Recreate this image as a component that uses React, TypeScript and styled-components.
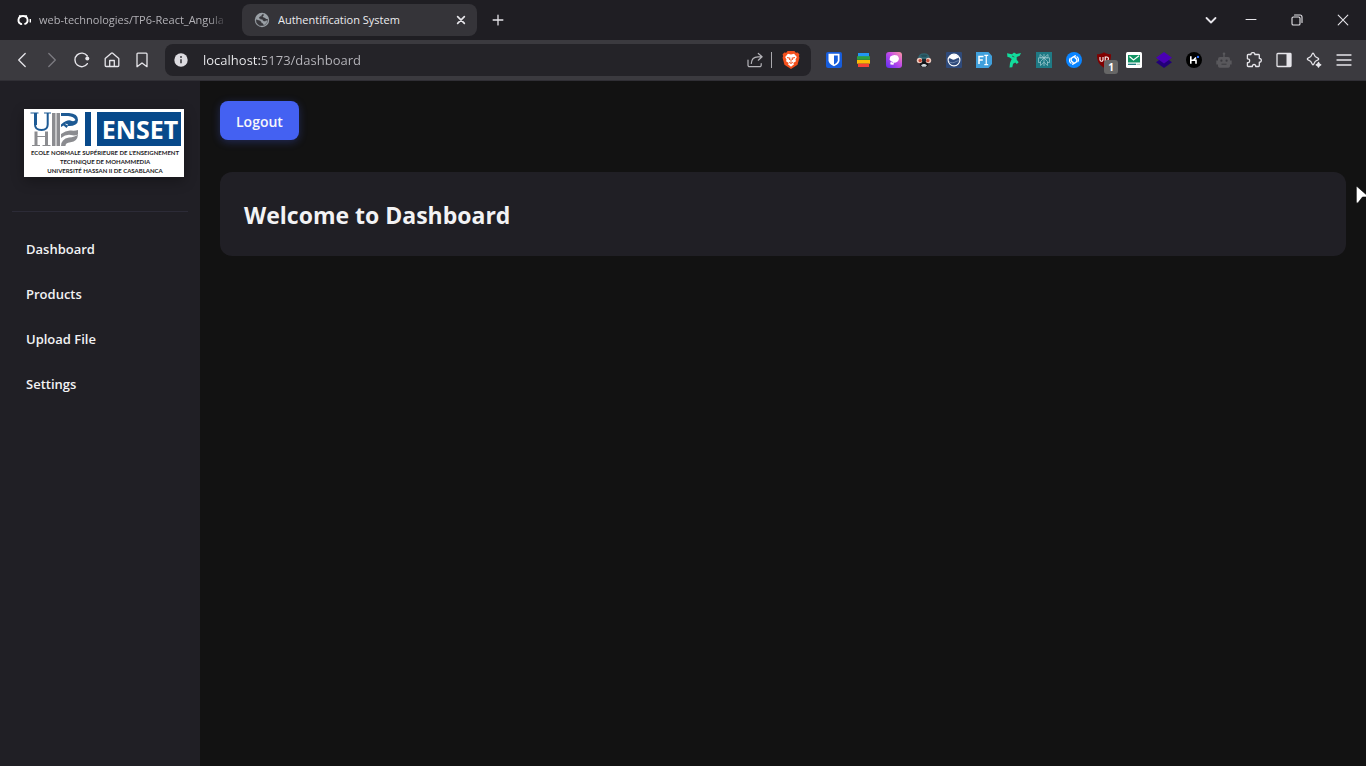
import React from "react";
import styled, { createGlobalStyle } from "styled-components";

const GlobalStyle = createGlobalStyle`
  * { box-sizing: border-box; }
  body {
    margin: 0;
    background: #121212;
    color: #f2f2f4;
    font-family: "Open Sans", "Noto Sans", sans-serif;
    overflow-x: hidden;
  }
  button { font-family: inherit; border: 0; padding: 0; background: none; color: inherit; cursor: pointer; }
`;

const Screen = styled.div`
  display: flex;
  flex-direction: column;
  min-height: 100vh;
`;

/* ---------- browser chrome ---------- */

const TabStrip = styled.div`
  display: flex;
  align-items: center;
  height: 40px;
  background: #1f1e23;
`;

const Tab = styled.div<{ $active?: boolean }>`
  display: flex;
  align-items: center;
  gap: ${(p) => (p.$active ? 8 : 7)}px;
  width: ${(p) => (p.$active ? 235 : 228)}px;
  height: 32px;
  margin-right: ${(p) => (p.$active ? 6 : 14)}px;
  padding: ${(p) => (p.$active ? "0 8px 0 12px" : "0 0 0 16px")};
  border-radius: 8px;
  background: ${(p) => (p.$active ? "#353439" : "transparent")};
  color: ${(p) => (p.$active ? "#ececef" : "#b2b1b6")};
`;

const TabTitle = styled.button<{ $fade?: boolean }>`
  flex: 1;
  min-width: 0;
  overflow: hidden;
  text-align: left;
  white-space: nowrap;
  font-size: 11px;
  line-height: 20px;
  ${(p) => p.$fade && "mask-image: linear-gradient(90deg, #000 calc(100% - 20px), transparent);"}
`;

const Spacer = styled.div`
  flex: 1;
`;

const IconButton = styled.button<{ $w?: number; $h?: number }>`
  position: relative;
  display: flex;
  flex: none;
  align-items: center;
  justify-content: center;
  width: ${(p) => p.$w ?? 30}px;
  height: ${(p) => p.$h ?? 30}px;
  color: #e6e5ea;
`;

const Toolbar = styled.div`
  display: flex;
  align-items: center;
  gap: 8px;
  height: 41px;
  padding: 0 7px;
  background: #3b3a3f;
  border-bottom: 1px solid #302f35;
`;

const IconGroup = styled.div`
  display: flex;
`;

const AddressBar = styled.div`
  display: flex;
  flex: 1;
  align-items: center;
  min-width: 0;
  height: 32px;
  padding: 0 5px 0 8px;
  border-radius: 8px;
  background: #242328;
`;

const AddressInput = styled.input`
  flex: 1;
  min-width: 0;
  height: 24px;
  margin-left: 14px;
  padding: 0;
  border: 0;
  outline: 0;
  font-family: inherit;
  font-size: 13px;
  line-height: 24px;
  color: #dcdce0;
  background: linear-gradient(90deg, #f0f0f3 58px, #b9b8be 58px);
  background-clip: text;
  -webkit-text-fill-color: transparent;
`;

const AddressDivider = styled.span`
  width: 1px;
  height: 16px;
  margin-right: 4px;
  background: #a9a8ad;
`;

const Badge = styled.span`
  position: absolute;
  right: 1px;
  bottom: 1px;
  width: 14px;
  height: 14px;
  border-radius: 3px;
  background: #666666;
  color: #ffffff;
  font-size: 10px;
  font-weight: 700;
  line-height: 14px;
  text-align: center;
`;

/* ---------- dashboard page ---------- */

const Page = styled.div`
  display: flex;
  flex: 1;
`;

const Sidebar = styled.aside`
  width: 200px;
  flex: none;
  padding: 28px 12px;
  background: #201f25;
`;

const Brand = styled.div`
  padding: 0 12px 34px;
  border-bottom: 1px solid #2c2b37;
`;

const LogoFrame = styled.svg`
  display: block;
  width: 160px;
  height: 68px;
  background: #ffffff;
  box-shadow: 0 4px 12px rgba(0, 0, 0, 0.3);
`;

const Nav = styled.nav`
  display: flex;
  flex-direction: column;
  gap: 4px;
  padding-top: 17px;
`;

const NavLink = styled.a`
  padding: 10px 14px;
  border-radius: 8px;
  color: #f2f2f4;
  font-size: 13px;
  font-weight: 600;
  line-height: 21px;
  text-decoration: none;
`;

const Main = styled.main`
  flex: 1;
  min-width: 0;
  padding: 20px;
`;

const LogoutButton = styled.button`
  height: 39px;
  padding: 2px 16px 0;
  border-radius: 8px;
  background: #4461f2;
  box-shadow: 0 2px 8px rgba(68, 97, 242, 0.3);
  color: #f6f6fa;
  font-size: 14px;
  font-weight: 600;
`;

const Card = styled.section`
  margin-top: 32px;
  padding: 25px 24px 23px;
  border-radius: 12px;
  background: #201f25;
`;

const Heading = styled.h1`
  margin: 0;
  font-size: 23px;
  font-weight: 700;
  line-height: 36px;
`;

const Pointer = styled.svg`
  position: fixed;
  top: 185px;
  left: calc(100% - 11px);
`;

/* ---------- icons ---------- */

const Icon = ({ children, size = 16, sw = 1.3 }: { children: React.ReactNode; size?: number; sw?: number }) => (
  <svg width={size} height={size} viewBox="0 0 16 16" fill="none" stroke="currentColor" strokeWidth={sw} strokeLinecap="round" strokeLinejoin="round" aria-hidden="true">
    {children}
  </svg>
);

const Art = ({ children, size = 16 }: { children: React.ReactNode; size?: number }) => (
  <svg width={size} height={size} viewBox="0 0 16 16" aria-hidden="true">
    {children}
  </svg>
);

const navIcons = [
  { label: "Back", icon: <Icon><path d="M11.2 1.5 4.7 8l6.500 6.500" /></Icon> },
  { label: "Forward", icon: <Icon><path stroke="#7c7b81" d="M4.800 1.500 11.300 8l-6.500 6.500" /></Icon> },
  {
    label: "Reload",
    icon: (
      <Icon sw={1.4}>
        <path d="M13.400 11.700A6.800 6.800 0 1 1 13.300 4" />
        <circle cx="13.300" cy="6.500" r="2" fill="currentColor" stroke="none" />
      </Icon>
    ),
  },
  {
    label: "Home",
    icon: (
      <Icon>
        <path d="M1.200 6.500 7.300 1.200a1.100 1.100 0 0 1 1.400 0l6.100 5.300v7a1 1 0 0 1-1 1H2.200a1 1 0 0 1-1-1z" />
        <path d="M5.700 14.300V8.500h4.600v5.800" />
      </Icon>
    ),
  },
  { label: "Bookmark", icon: <Icon><path d="M3 2a.9.9 0 0 1 .9-.9h8.200a.9.9 0 0 1 .9.900v12.700l-5-3.800-5 3.800z" /></Icon> },
];

const extensions: { label: string; icon: React.ReactNode; badge?: string }[] = [
  {
    label: "Bitwarden",
    icon: (
      <Art>
        <rect width="16" height="16" rx="2" fill="#175ddc" />
        <path d="M2.500 1.800h11v6.400c0 3-3.200 4.900-5.500 6-2.300-1.100-5.500-3-5.500-6z" fill="#fff" />
        <path d="M8 3.400h3.800v4.800c0 1.900-2 3.200-3.800 4.200z" fill="#175ddc" />
      </Art>
    ),
  },
  {
    label: "Layers",
    icon: (
      <Art>
        <path d="M2 1h11v4H2z" fill="#2196f3" />
        <path d="M1 4.200h13v3.600H1z" fill="#2e9e3f" />
        <path d="M1 8h13v3.700H1z" fill="#fbbc05" />
        <path d="M2 11.700h11V15H2z" fill="#f44336" />
      </Art>
    ),
  },
  {
    label: "Design",
    icon: (
      <Art>
        <defs>
          <linearGradient id="violet" x1="1" y1="0" x2="0" y2="1">
            <stop offset="0" stopColor="#ff9aa0" />
            <stop offset="0.450" stopColor="#c24be8" />
            <stop offset="1" stopColor="#5b2df0" />
          </linearGradient>
        </defs>
        <rect width="16" height="16" rx="3" fill="url(#violet)" />
        <path d="M4.300 4.500Q7.500 2 11.300 3.500q3 3 .6 5.700L10 10.500l-2 .3-.5 1.900-3-.2-.2-1.800.9-1L3.500 7.500z" fill="#fff" />
        <path d="m4.500 9.200 2.800 1.500" stroke="#a04be8" strokeWidth="0.700" />
      </Art>
    ),
  },
  {
    label: "Mask",
    icon: (
      <Art>
        <path d="M2 6.500C2.300 3 4.500 1.200 8 1.200s5.700 1.800 6 5.300L15 8H1z" fill="#2f6470" />
        <path d="M4.500 3.200Q8 2 11.500 3.200L10 5H6z" fill="#25505b" />
        <path d="M2.500 9h11l-1.300 4L10.500 15h-5l-1.700-2z" fill="#121317" />
        <circle cx="3.600" cy="8.500" r="2.800" fill="#ecc9bd" />
        <circle cx="12.400" cy="8.500" r="2.800" fill="#ecc9bd" />
        <circle cx="4.200" cy="8.600" r="1.700" fill="#c04a38" />
        <circle cx="11.800" cy="8.600" r="1.700" fill="#c04a38" />
        <path d="M6 7h4v2.300H6z" fill="#1b2b33" />
        <path d="M5 13.200 7 12h2l2 1.200-1.300 1.600H6.300z" fill="#cfd6da" />
      </Art>
    ),
  },
  {
    label: "Globe",
    icon: (
      <Art>
        <rect width="16" height="16" rx="1" fill="#2f4a7a" />
        <circle cx="8" cy="8" r="5.900" fill="none" stroke="#fff" strokeWidth="1.100" />
        <path d="M2.600 6.500C4.500 5.300 6 8.500 8.600 7.600c2-.7 2.700-2 4.400-1.400A5.400 5.400 0 0 0 2.600 6.500z" fill="#fff" />
        <path d="M3 9.500c2 2 5 1.300 6.800.2 1.300-.8 2.400-1 3.500-.6" stroke="#8fa3c4" strokeWidth="0.700" fill="none" />
      </Art>
    ),
  },
  {
    label: "Font inspector",
    icon: (
      <Art>
        <path d="M0 0h12.500L16 4v8l-3.500 4H0z" fill="#40a0dc" />
        <path d="M3 12V4.500h4.500M3 8h3.800" stroke="#fff" strokeWidth="1.500" fill="none" />
        <path d="M8.300 3.300h3.900M10.250 3.300v9.400M8.300 12.700h3.900" stroke="#fff" strokeWidth="1.200" />
      </Art>
    ),
  },
  {
    label: "Runner",
    icon: (
      <Art>
        <path d="M1 1.200 6 2.300 8 .6l2.500 1.500L15 .9l-1.300 2.800-3 1.300v2.700l2 2.600-1.900 1.600-1.500-1.400-2.200 1.300-.8 3.400-2.800.3.500-4.500 1.700-4L3.200 5.200 1.500 5z" fill="#12dc9c" />
        <path d="m6 4 2.300 1" stroke="#3b3a3f" strokeWidth="0.700" />
      </Art>
    ),
  },
  {
    label: "Perplexity",
    icon: (
      <Art>
        <rect width="16" height="16" fill="#1f7a85" />
        <path d="M8 2v12M4 2.500v3.300h8V2.500L8 5.800zM2.500 5.800h11v4.700h-2.200M2.500 5.800v4.700h2.200M8 6 4.500 9.500v4L8 10.300l3.500 3.200v-4z" stroke="#a3cdd2" strokeWidth="0.700" fill="none" />
      </Art>
    ),
  },
  {
    label: "Shazam",
    icon: (
      <Art>
        <circle cx="8" cy="8" r="8" fill="#0a84ff" />
        <path d="M9.300 3.800 6.200 5.700C4.500 6.800 4.800 8.600 6 9.600l1 .7M6.700 12.200l3.100-1.900c1.700-1.100 1.400-2.900.2-3.900l-1-.7" stroke="#fff" strokeWidth="1.500" fill="none" strokeLinecap="round" />
        <path d="M4.100 6.200c-1.300 2-.5 4.200 1 5M11.900 9.800c1.300-2 .5-4.200-1-5" stroke="#fff" strokeWidth="1.100" fill="none" strokeLinecap="round" />
      </Art>
    ),
  },
  {
    label: "uBlock Origin",
    badge: "1",
    icon: (
      <Art>
        <path d="M8 .3c2 1.500 4.500 2 7 2 0 6-1.200 10-7 13.400C2.200 12.300 1 8.300 1 2.300c2.500 0 5-.5 7-2z" fill="#800000" />
        <path d="M4 5v2.800a1.500 1.500 0 0 0 3 0V5M9.200 9.500V5h1.500a1.500 1.500 0 0 1 0 3.500" stroke="#fff" strokeWidth="1.100" fill="none" />
      </Art>
    ),
  },
  {
    label: "Mail",
    icon: (
      <Art>
        <rect width="16" height="16" rx="1.500" fill="#fff" />
        <path d="M2 3h12v7.500H2z" fill="#129464" />
        <path d="m3.500 4.500 4 3.500L13 3.800" stroke="#fff" strokeWidth="1.100" fill="none" />
        <path d="M2 12.300h8" stroke="#12747a" strokeWidth="1.300" />
        <path d="M10.500 12.300H14" stroke="#9fc8b8" strokeWidth="1" />
      </Art>
    ),
  },
  {
    label: "Stack",
    icon: (
      <Art>
        <path d="m8 4.600 8 5.700-8 5.700-8-5.700z" fill="#220078" />
        <path d="m8 0 8 5.700-8 5.700-8-5.700z" fill="#4a00b4" />
      </Art>
    ),
  },
  {
    label: "Kit",
    icon: (
      <Art>
        <circle cx="8" cy="8" r="8" fill="#000" />
        <path d="M4.800 4.300v7.500M5 8.300h2.500L10 5.500M7.700 8.300H10v3.500" stroke="#fff" strokeWidth="1.600" fill="none" />
        <circle cx="12" cy="4.900" r="1.200" fill="#2d6cf6" />
      </Art>
    ),
  },
  {
    label: "Robot",
    icon: (
      <Art>
        <path d="M7.300 2.500h1.400V5H12a2 2 0 0 1 2 2v1.500h1.700v4H14V14a1.700 1.700 0 0 1-1.700 1.700H3.700A1.700 1.700 0 0 1 2 14v-1.500H.3v-4H2V7a2 2 0 0 1 2-2h3.300z" fill="#59585c" />
        <circle cx="8" cy="1.800" r="1.300" fill="#59585c" />
        <circle cx="5.400" cy="8.700" r="1.100" fill="#3b3a3f" />
        <circle cx="10.600" cy="8.700" r="1.100" fill="#3b3a3f" />
        <path d="M5.500 12.200h5" stroke="#3b3a3f" strokeWidth="1" />
      </Art>
    ),
  },
  {
    label: "Extensions",
    icon: (
      <Icon>
        <path d="M2.200 2.500H5c-.4-2.500 4.200-2.500 3.800 0h3.700a.8.8 0 0 1 .8.800V6.500c2.700-.4 2.700 4 0 3.700v3.500a.8.8 0 0 1-.8.800H9.700c.4-2.700-3.700-2.700-3.300 0H2.200a.8.8 0 0 1-.8-.8v-3c3 .3 3-4.200 0-3.900V3.300a.8.8 0 0 1 .8-.8z" />
      </Icon>
    ),
  },
  {
    label: "Side panel",
    icon: (
      <Icon>
        <rect x="1" y="1.500" width="14" height="13" rx="0.800" />
        <path d="M10.500 1.500H15v13h-4.500z" fill="currentColor" stroke="none" />
      </Icon>
    ),
  },
  {
    label: "Leo AI",
    icon: (
      <Icon>
        <path d="M7 1.200c.6 0 .8.500 1 1.200.7 2.300 1.200 2.800 3.500 3.500.7.200 1.200.5 1.200 1.100s-.5.900-1.200 1.100C9.200 8.800 8.700 9.300 8 11.600c-.2.700-.4 1.200-1 1.200s-.8-.5-1-1.200C5.300 9.300 4.800 8.800 2.500 8.100 1.800 7.900 1.300 7.600 1.300 7s.5-.9 1.200-1.100C4.800 5.200 5.300 4.700 6 2.400c.2-.7.4-1.200 1-1.200z" />
        <path d="M12.500 10.500q.4 1.800 2.300 2.300-1.900.5-2.300 2.300-.4-1.800-2.300-2.300 1.900-.5 2.300-2.300z" fill="currentColor" />
      </Icon>
    ),
  },
  { label: "Menu", icon: <Icon><path d="M1 3h14M1 8h14M1 13h14" /></Icon> },
];

const GithubIcon = () => (
  <Art>
    <path d="M5.800 12.200C.8 10.800 1.600 4 7 4s6.200 6.800 1.400 8.200" stroke="#fff" strokeWidth="1.900" fill="none" />
    <path d="M2.800 2.900 5.500 3.800 4 6zM11.200 2.900 8.500 3.800 10 6z" fill="#fff" />
    <path d="m2 10.300 2.400 2h1.800" stroke="#fff" strokeWidth="1" fill="none" />
    <path d="M14.300 7v3.500" stroke="#fff" strokeWidth="1.400" />
  </Art>
);

const GlobeIcon = () => (
  <Art>
    <circle cx="8" cy="8" r="7.200" fill="#9aa0a6" />
    <path d="M9.500 2.200C7 2.500 8.700 4.200 6.500 4.600 4.800 5 5 7 7 7.100c2.400.1 1.500 2 3.400 2 1.300 0 1.500-1 3.300-.7-.4 2.500-2 4.500-4.500 5.200.2-1.600-.2-2-1.300-2.400-1.400-.6-.3-1.700-1.900-2.300C4.800 8.500 3.500 8.300 2.200 7.800c-.1 3 1.600 5.300 4.300 6" stroke="#38373c" strokeWidth="0.500" fill="none" />
    <path d="M9.500 2.200C7 2.500 8.700 4.200 6.500 4.600 4.800 5 5 7 7 7.100c2.400.1 1.500 2 3.400 2 1.300 0 1.500-1 3.300-.7l.1-1.400c-1 .2-1.800-.1-2.500-.8-.9-.9-2-.5-2.500-1.200-.5-.8 1.500-.8.7-2.800z" fill="#38373c" />
    <path d="M2.200 7.800c1.300.5 2.600.7 3.800 1.100 1.600.6.500 1.700 1.900 2.300 1.100.4 1.500.8 1.300 2.400-3.700 1-7.200-1.800-7-5.800z" fill="#38373c" />
  </Art>
);

const EnsetLogo = () => (
  <LogoFrame viewBox="0 0 160 68" role="img" aria-label="ENSET Mohammedia">
    <g fill="none" stroke="#8b8c90">
      <path d="M12 22.500v14M22.500 22.500v14" strokeWidth="3" />
      <path d="M8 36.500h8M18.500 36.500h8M12 27.500h10.500" strokeWidth="1.200" />
    </g>
    <path d="M6.500 4h8M20 4h7" stroke="#1d5a94" strokeWidth="1.200" />
    <path d="M11 4v11.500q0 5.500 6.500 5.500 6.200 0 6.200-5.500V4" fill="none" stroke="#1d5a94" strokeWidth="2" />
    <path d="M11.500 4v12" stroke="#1d5a94" strokeWidth="3" />
    <path d="M28 4h3.500v33H28zM32.500 4H36v33h-3.500z" fill="#8b8c90" />
    <path d="M37 4h8q9 .5 9 7 0 3-2.500 4.500-3.500 2-7.500 1.500l-1.500 2-3-2.500-2.500 1.500v-2.500q6-5 9.500-4 3.500 1.500 5-.5Q50 7.500 44 7H37z" fill="#1d5a94" />
    <path d="m41.500 15 2.500 1" stroke="#fff" strokeWidth="0.900" />
    <path d="M37 25q5-4 10-3.500 4 .5 7-.5v4.500q-3 1.500-7 .5-5-1-10 3z" fill="#8b8c90" />
    <path d="M37 37q0-7 8-8.500 6-.5 9-3-.5 7-7.500 7.700Q41 34 41.500 37z" fill="#8b8c90" />
    <path d="M61 3h6v34h-6zM73 3h84v34H73z" fill="#07498a" />
    <text x="116" y="30" textAnchor="middle" fill="#fff" fontFamily="Open Sans" fontWeight="700" fontSize="25">ENSET</text>
    <g textAnchor="middle" fill="#1c1c1e" fontFamily="Lato" fontWeight="700" fontSize="6">
      <text x="81" y="46">ECOLE NORMALE SUPÉRIEURE DE L'ENSEIGNEMENT</text>
      <text x="81" y="55">TECHNIQUE DE MOHAMMEDIA</text>
      <text x="81" y="64">UNIVERSITÉ HASSAN II DE CASABLANCA</text>
    </g>
  </LogoFrame>
);

const links = ["Dashboard", "Products", "Upload File", "Settings"];

export default function App() {
  return (
    <Screen>
      <GlobalStyle />
      <TabStrip>
        <Tab>
          <GithubIcon />
          <TabTitle $fade>web-technologies/TP6-React_Angula</TabTitle>
        </Tab>
        <Tab $active>
          <GlobeIcon />
          <TabTitle>Authentification System</TabTitle>
          <IconButton $w={16} $h={16} aria-label="Close tab">
            <Icon size={12} sw={2.2}><path d="m3.500 3.500 9 9M12.500 3.500l-9 9" /></Icon>
          </IconButton>
        </Tab>
        <IconButton aria-label="New tab"><Icon size={12} sw={1.7}><path d="M8 1.500v13M1.500 8h13" /></Icon></IconButton>
        <Spacer />
        <IconButton $w={34} aria-label="Search tabs"><Icon sw={1.8}><path d="m3.500 6 4.500 4.500L12.500 6" /></Icon></IconButton>
        <IconButton $w={46} aria-label="Minimize"><Icon sw={1}><path d="M3 7.500h10" /></Icon></IconButton>
        <IconButton $w={46} aria-label="Restore">
          <Icon sw={1.1}>
            <rect x="3" y="5" width="8" height="8" rx="1.300" />
            <path d="M5.500 3h5.500a2 2 0 0 1 2 2v5.500" />
          </Icon>
        </IconButton>
        <IconButton $w={46} aria-label="Close window"><Icon sw={1.1}><path d="m3.200 3.200 9.600 9.600M12.800 3.200l-9.600 9.600" /></Icon></IconButton>
      </TabStrip>

      <Toolbar>
        <IconGroup>
          {navIcons.map((n) => (
            <IconButton key={n.label} aria-label={n.label}>{n.icon}</IconButton>
          ))}
        </IconGroup>
        <AddressBar>
          <Art>
            <circle cx="8" cy="8" r="6.700" fill="#dcdbe0" />
            <path d="M8 7.300v4" stroke="#3b3a3f" strokeWidth="1.600" />
            <circle cx="8" cy="5" r="1" fill="#3b3a3f" />
          </Art>
          <AddressInput aria-label="Address" defaultValue="localhost:5173/dashboard" />
          <IconButton $w={32} aria-label="Share">
            <Icon sw={1.200}>
              <path d="M1 8v5.200a1.500 1.500 0 0 0 1.500 1.500h10.200a1.500 1.500 0 0 0 1.500-1.500v-1.500M4.300 11.500C4.500 7 7 4.800 11 4.800h3.800M11.300 1.500l3.800 3.300-3.800 3.400" stroke="#b5b4b9" />
            </Icon>
          </IconButton>
          <AddressDivider />
          <IconButton aria-label="Brave Shields">
            <Art size={18}>
              <path d="M5 0h6l1.300 1.500 1.700-.2L15.500 3l-.5 1.500.5 1.500-1.700 6.200L8 16 2.200 12.200.5 6 1 4.500.5 3 2 1.300l1.700.2z" fill="#f4511e" />
              <path d="m5.300 2.500 2.700.5 2.700-.5 2.500 2.900-1.200 2.200.4 1.400-2.400 1.700.7 1L8 14l-2.700-2.300.7-1L3.600 9 4 7.600 2.800 5.400z" fill="#fff" />
              <path d="m4.500 5.700 2.500.7-.5 1.500M11.500 5.700 9 6.400l.5 1.500M8 7v2.500M6.500 10 8 11l1.500-1" stroke="#f4511e" strokeWidth="0.900" fill="none" />
            </Art>
          </IconButton>
        </AddressBar>
        <IconGroup>
          {extensions.map((e) => (
            <IconButton key={e.label} aria-label={e.label}>
              {e.icon}
              {e.badge && <Badge>{e.badge}</Badge>}
            </IconButton>
          ))}
        </IconGroup>
      </Toolbar>

      <Page>
        <Sidebar>
          <Brand><EnsetLogo /></Brand>
          <Nav>
            {links.map((l) => (
              <NavLink key={l} href="#">{l}</NavLink>
            ))}
          </Nav>
        </Sidebar>
        <Main>
          <LogoutButton>Logout</LogoutButton>
          <Card>
            <Heading>Welcome to Dashboard</Heading>
          </Card>
        </Main>
      </Page>
      <Pointer width="20" height="20" viewBox="0 0 20 20" aria-hidden="true">
        <path d="M2 1.500 14 12H7.500L3 17.800Q1.500 19 1.300 17V2.500Q1.300 1 2 1.500z" fill="#fff" stroke="#000" strokeWidth="0.600" />
      </Pointer>
    </Screen>
  );
}
